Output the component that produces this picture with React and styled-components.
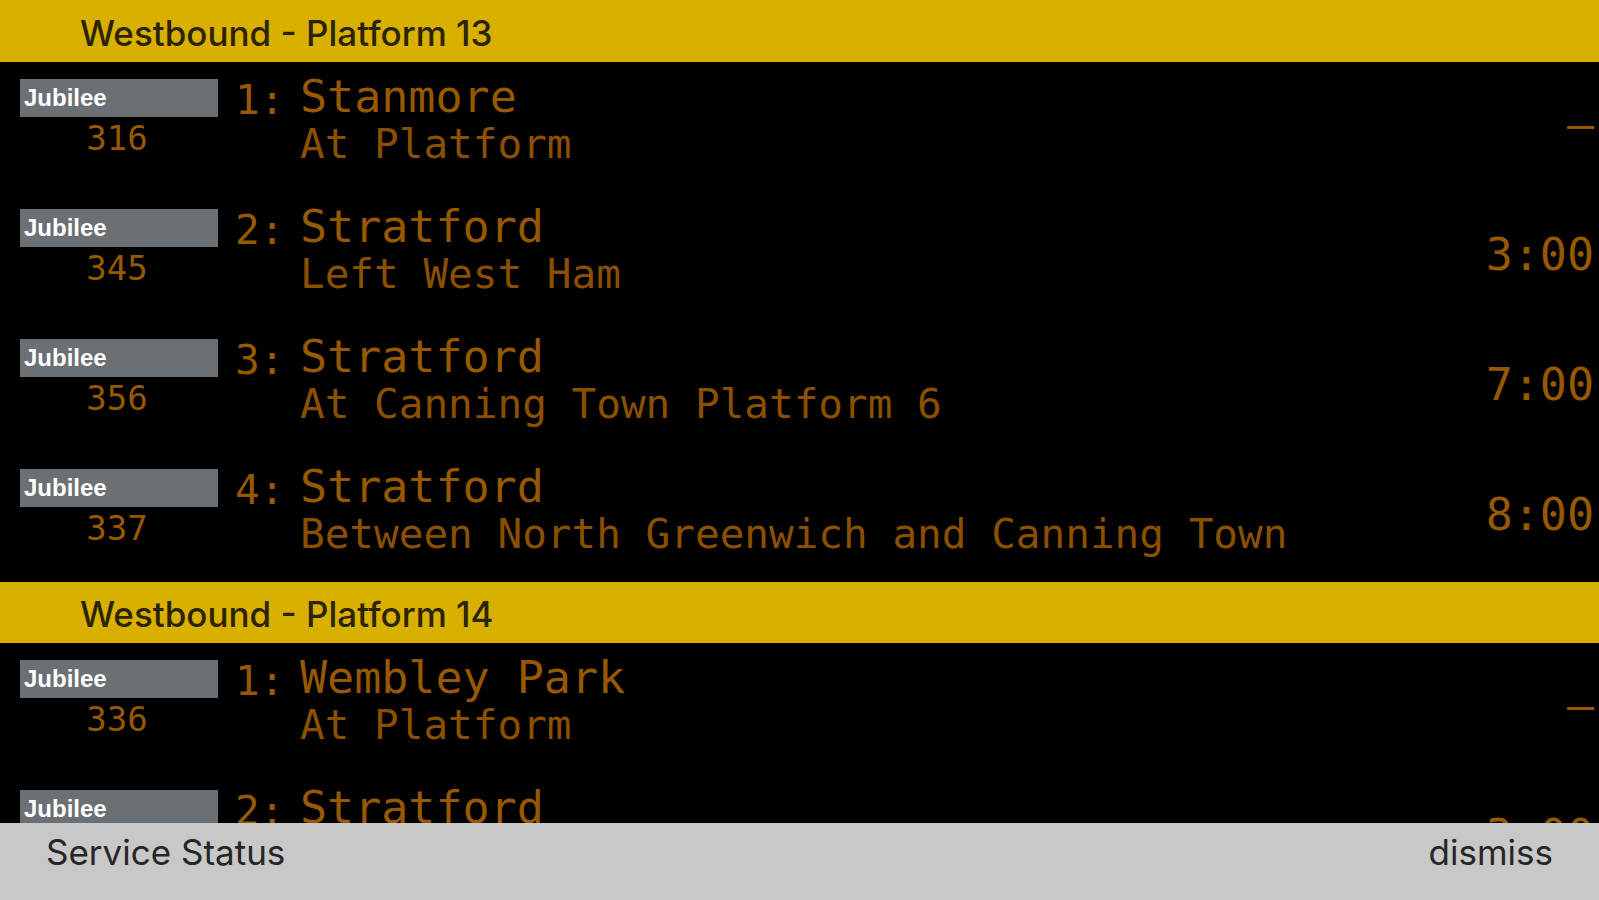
import React from "react";
import styled, { createGlobalStyle } from "styled-components";

const GlobalStyle = createGlobalStyle`
  *, *::before, *::after { box-sizing: border-box; }
  body { margin: 0; background: #000; }
`;

const sans = `Inter, "Liberation Sans", sans-serif`;
const mono = `"DejaVu Sans Mono", "Liberation Mono", monospace`;

const Page = styled.div`
  display: flex;
  flex-direction: column;
  height: 100vh;
  background: #000;
`;

const Board = styled.main`
  flex: 1;
  min-height: 0;
  overflow: hidden;
  border-top: 1px solid #d9b000;
`;

const PlatformTitle = styled.h2`
  margin: 0;
  padding: 2px 80px 0;
  height: 61px;
  background: #d9b000;
  color: #2b2400;
  font: 500 35px/60px ${sans};
`;

const Departures = styled.ol`
  list-style: none;
  margin: 0;
  padding: 0;
`;

const Departure = styled.li`
  display: grid;
  grid-template-columns: 198px 48px 1fr auto;
  column-gap: 17px;
  height: 130px;
  padding: 12px 5px 16px 20px;
  color: #965800;
  font-family: ${mono};
  white-space: nowrap;
`;

const Train = styled.div`
  padding-top: 5px;
`;

const LineBadge = styled.div`
  height: 38px;
  padding-left: 4px;
  background: #6a7074;
  color: #fff;
  font: 700 24px/38px "Liberation Sans", Arial, sans-serif;
`;

const TrainNumber = styled.div`
  padding-right: 4px;
  text-align: center;
  font-size: 34px;
  line-height: 42px;
`;

const Position = styled.div`
  padding-top: 3px;
  font-size: 41px;
  line-height: 46px;
`;

const Destination = styled.div`
  font-size: 45px;
  line-height: 46px;
`;

const Location = styled.div`
  color: #8a5000;
  font-size: 41px;
  line-height: 48px;
`;

const Time = styled.div`
  align-self: center;
  font-size: 45px;
  line-height: 46px;
`;

const StatusBar = styled.footer`
  display: flex;
  justify-content: space-between;
  align-items: flex-start;
  flex: none;
  height: 77px;
  padding: 6px 46px 0;
  background: #c8c8c8;
`;

const BarButton = styled.button`
  border: 0;
  padding: 0;
  background: none;
  color: #262626;
  font: 400 35px/46px ${sans};
  cursor: pointer;
`;

const platforms = [
  {
    name: "Westbound - Platform 13",
    trains: [
      { number: "316", to: "Stanmore", at: "At Platform", time: "–" },
      { number: "345", to: "Stratford", at: "Left West Ham", time: "3:00" },
      { number: "356", to: "Stratford", at: "At Canning Town Platform 6", time: "7:00" },
      { number: "337", to: "Stratford", at: "Between North Greenwich and Canning Town", time: "8:00" },
    ],
  },
  {
    name: "Westbound - Platform 14",
    trains: [
      { number: "336", to: "Wembley Park", at: "At Platform", time: "–" },
      { to: "Stratford", time: "3:00" },
    ],
  },
];

export default function App() {
  return (
    <Page>
      <GlobalStyle />
      <Board>
        {platforms.map((platform) => (
          <section key={platform.name}>
            <PlatformTitle>{platform.name}</PlatformTitle>
            <Departures>
              {platform.trains.map((train, i) => (
                <Departure key={i}>
                  <Train>
                    <LineBadge>Jubilee</LineBadge>
                    <TrainNumber>{train.number}</TrainNumber>
                  </Train>
                  <Position>{i + 1}:</Position>
                  <div>
                    <Destination>{train.to}</Destination>
                    <Location>{train.at}</Location>
                  </div>
                  <Time>{train.time}</Time>
                </Departure>
              ))}
            </Departures>
          </section>
        ))}
      </Board>
      <StatusBar>
        <BarButton type="button">Service Status</BarButton>
        <BarButton type="button">dismiss</BarButton>
      </StatusBar>
    </Page>
  );
}
